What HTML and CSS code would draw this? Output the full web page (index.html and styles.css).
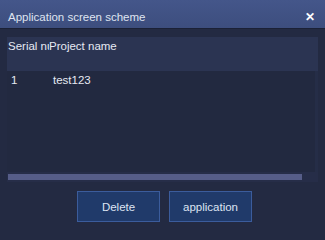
FILE: index.html
```html
<!DOCTYPE html>
<html lang="en">
<head>
    <meta charset="UTF-8">
    <title>Application screen scheme</title>
    <link rel="stylesheet" href="styles.css">
</head>
<body>
    <div class="dialog">
        <div class="dialog-header">
            <span class="dialog-title">Application screen scheme</span>
            <span class="close">&#x2715;</span>
        </div>
        <div class="dialog-body">
            <div class="table">
                <div class="table-head">
                    <div class="col-serial">Serial number</div>
                    <div class="col-name">Project name</div>
                </div>
                <div class="table-rows">
                    <div class="row">
                        <div class="col-serial">1</div>
                        <div class="col-name">test123</div>
                    </div>
                </div>
                <div class="scroll-track">
                    <div class="scroll-thumb"></div>
                </div>
            </div>
            <div class="actions">
                <button class="btn">Delete</button>
                <button class="btn">application</button>
            </div>
        </div>
    </div>
</body>
</html>
```

FILE: styles.css
```css
body {
    margin: 0;
    font-family: 'Liberation Sans', Arial, sans-serif;
    background: #232a42;
}

.dialog {
    width: 325px;
    height: 240px;
    background: #232a42;
    color: #e6e9f2;
    font-size: 11.5px;
}

.dialog-header {
    height: 29px;
    display: flex;
    align-items: center;
    justify-content: space-between;
    padding: 6px 10px 0 8px;
    background: linear-gradient(to bottom, #44568a, #3d4e7e);
    border-bottom: 1px solid #1b2136;
    box-sizing: border-box;
}

.dialog-title {
    font-size: 11.5px;
    color: #dfe4f0;
}

.close {
    font-size: 12px;
    font-weight: bold;
    color: #ffffff;
}

.dialog-body {
    padding: 8px 7px 0 7px;
}

.table {
    background: #252d47;
    height: 145px;
    display: flex;
    flex-direction: column;
}

.table-head {
    display: flex;
    height: 34px;
    background: #2b3452;
    padding-top: 3px;
    box-sizing: border-box;
}

/* the serial column is too narrow for its title, so it clips */
.table-head .col-serial {
    width: 41px;
    padding-left: 1px;
    white-space: nowrap;
    overflow: hidden;
}

.table-rows {
    flex: 1;
    background: #222940;
    margin-right: 3px;
}

.row {
    display: flex;
    padding-top: 3px;
}

.row .col-serial {
    padding-left: 4px;
    width: 42px;
}

.scroll-track {
    height: 10px;
    background: #262d48;
    padding: 2px 1px;
    box-sizing: border-box;
}

.scroll-thumb {
    width: 294px;
    height: 6px;
    background: #565d88;
}

.actions {
    display: flex;
    justify-content: center;
    gap: 9px;
    margin-top: 9px;
    padding-left: 4px;
}

.btn {
    width: 83px;
    height: 31px;
    background: #203a6a;
    border: 1px solid #3b5c9c;
    color: #dde4f2;
    font-family: 'Liberation Sans', Arial, sans-serif;
    font-size: 11.5px;
    padding: 0;
}
```
